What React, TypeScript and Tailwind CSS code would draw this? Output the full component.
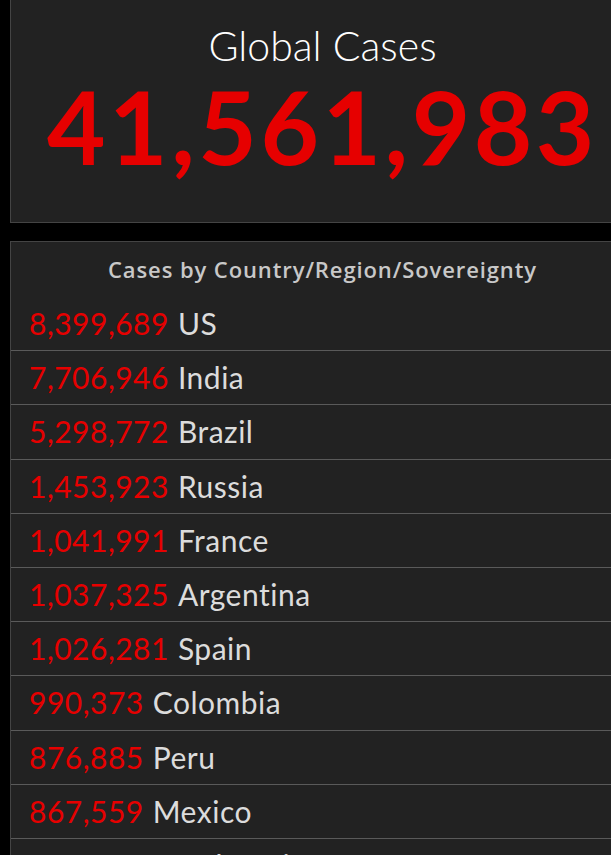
import React from "react";

const rows: [string, string][] = [
  ["8,399,689", "US"],
  ["7,706,946", "India"],
  ["5,298,772", "Brazil"],
  ["1,453,923", "Russia"],
  ["1,041,991", "France"],
  ["1,037,325", "Argentina"],
  ["1,026,281", "Spain"],
  ["990,373", "Colombia"],
  ["876,885", "Peru"],
  ["867,559", "Mexico"],
  ["799,773", "South Africa"],
];

export default function App() {
  return (
    <div className="w-[611px] h-[855px] overflow-hidden bg-black" style={{ fontFamily: "Lato, 'Open Sans', sans-serif" }}>
      <div className="ml-[10px] w-[624px] h-[223px] bg-[#222222] border-b border-l border-[#444444] flex flex-col items-center">
        <div className="mt-[20px] text-[41px] leading-[52px] font-light text-white">Global Cases</div>
        <div className="mt-[0px] text-[101px] leading-[108px] font-bold tracking-[3.5px] text-[#e60000]">41,561,983</div>
      </div>
      <div className="ml-[10px] mt-[18px] w-[624px] bg-[#222222] border-t border-l border-[#444444]">
        <div className="h-[55px] flex items-center justify-center">
          <span className="text-[22px] font-semibold tracking-[0.9px] text-[#c8c8c8]" style={{ fontFamily: "'Open Sans', sans-serif" }}>
            Cases by Country/Region/Sovereignty
          </span>
        </div>
        {rows.map(([n, c]) => (
          <div key={c} className="h-[54.2px] border-b border-[#5a5a5a] flex items-center pl-[18px] text-[30px] tracking-[0.5px]">
            <span className="text-[#e60000]">{n}</span>
            <span className="ml-[9px] text-[#dcdcdc]">{c}</span>
          </div>
        ))}
      </div>
    </div>
  );
}
